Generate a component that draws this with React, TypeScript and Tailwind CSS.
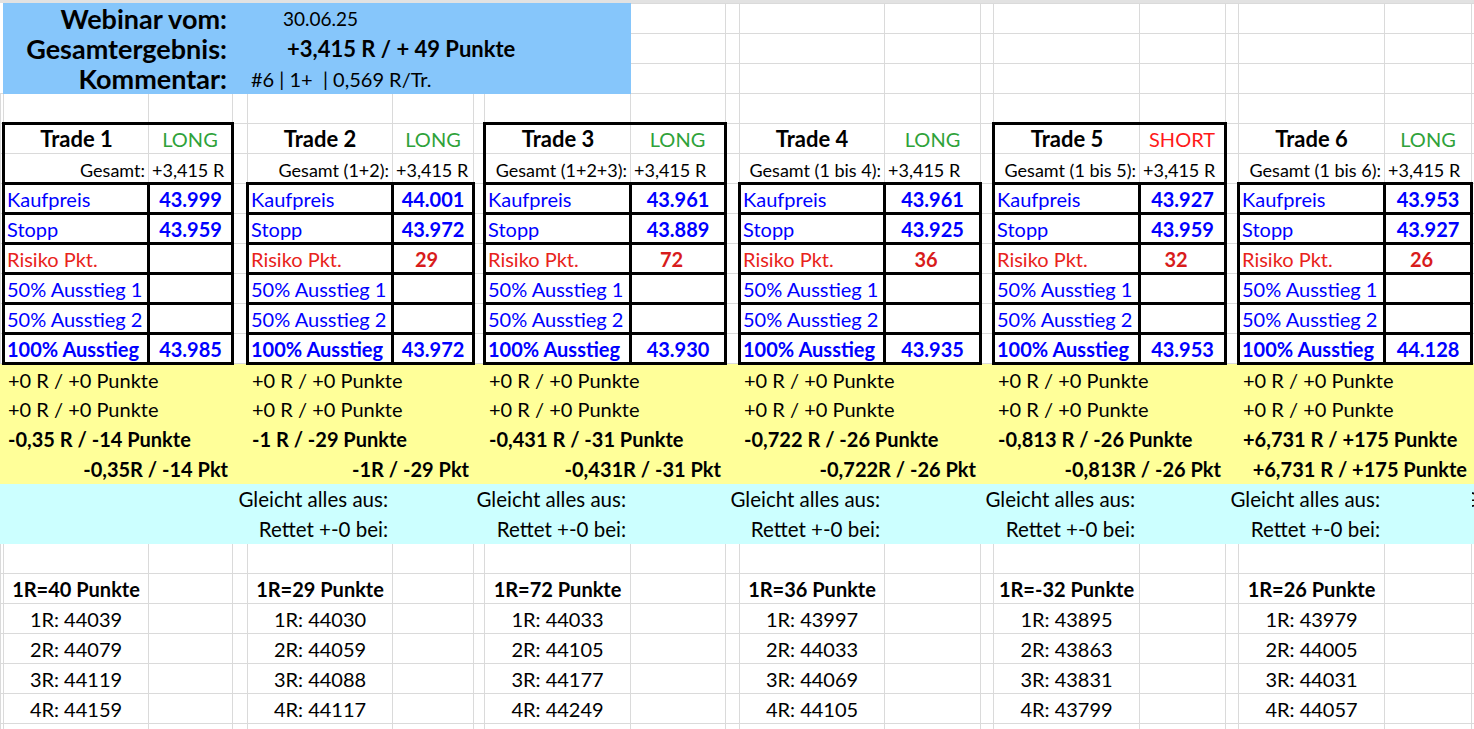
type Trade = {
  name: string;
  dir: "LONG" | "SHORT";
  gesamt: string;
  kauf: string;
  stopp: string;
  risiko: string;
  aus: string;
  res: string;
  sum: string;
  r: string;
  lv: string[];
  boxed: boolean;
};

const trades: Trade[] = [
  { name: "Trade 1", dir: "LONG", gesamt: "Gesamt:", kauf: "43.999", stopp: "43.959", risiko: "", aus: "43.985", res: "-0,35 R / -14 Punkte", sum: "-0,35R / -14 Pkt", r: "1R=40 Punkte", lv: ["44039", "44079", "44119", "44159"], boxed: true },
  { name: "Trade 2", dir: "LONG", gesamt: "Gesamt (1+2):", kauf: "44.001", stopp: "43.972", risiko: "29", aus: "43.972", res: "-1 R / -29 Punkte", sum: "-1R / -29 Pkt", r: "1R=29 Punkte", lv: ["44030", "44059", "44088", "44117"], boxed: false },
  { name: "Trade 3", dir: "LONG", gesamt: "Gesamt (1+2+3):", kauf: "43.961", stopp: "43.889", risiko: "72", aus: "43.930", res: "-0,431 R / -31 Punkte", sum: "-0,431R / -31 Pkt", r: "1R=72 Punkte", lv: ["44033", "44105", "44177", "44249"], boxed: true },
  { name: "Trade 4", dir: "LONG", gesamt: "Gesamt (1 bis 4):", kauf: "43.961", stopp: "43.925", risiko: "36", aus: "43.935", res: "-0,722 R / -26 Punkte", sum: "-0,722R / -26 Pkt", r: "1R=36 Punkte", lv: ["43997", "44033", "44069", "44105"], boxed: false },
  { name: "Trade 5", dir: "SHORT", gesamt: "Gesamt (1 bis 5):", kauf: "43.927", stopp: "43.959", risiko: "32", aus: "43.953", res: "-0,813 R / -26 Punkte", sum: "-0,813R / -26 Pkt", r: "1R=-32 Punkte", lv: ["43895", "43863", "43831", "43799"], boxed: true },
  { name: "Trade 6", dir: "LONG", gesamt: "Gesamt (1 bis 6):", kauf: "43.953", stopp: "43.927", risiko: "26", aus: "44.128", res: "+6,731 R / +175 Punkte", sum: "+6,731 R / +175 Punkte", r: "1R=26 Punkte", lv: ["43979", "44005", "44031", "44057"], boxed: false },
];

// column widths of the sheet (px): pad, then label / value / spacer per trade
const COLS = [
  "w-[3px]", "w-[145px]", "w-[84px]", "w-[15px]", "w-[145px]", "w-[81px]", "w-[11px]",
  "w-[146px]", "w-[95px]", "w-[14px]", "w-[145px]", "w-[96px]", "w-[13px]", "w-[146px]",
  "w-[86px]", "w-[13px]", "w-[146px]", "w-[87px]", "w-[13px]", "w-[146px]",
];

const GRID = "p-0 whitespace-nowrap border border-[#dadada]";
const BOX = "p-0 whitespace-nowrap border-[3px] border-black";
const YEL = "p-0 whitespace-nowrap border border-[#ffff99] bg-[#ffff99]";
const CYA = "p-0 whitespace-nowrap border border-[#ccffff] bg-[#ccffff]";
const BLU = "p-0 whitespace-nowrap border border-[#86c6fb] bg-[#86c6fb]";

const boxRows: { label: string; key: "kauf" | "stopp" | "risiko" | "aus" | null; lc: string; vc: string }[] = [
  { label: "Kaufpreis", key: "kauf", lc: "text-[#0000ff]", vc: "text-[#0000ff] font-bold" },
  { label: "Stopp", key: "stopp", lc: "text-[#0000ff]", vc: "text-[#0000ff] font-bold" },
  { label: "Risiko Pkt.", key: "risiko", lc: "text-[#e8231b]", vc: "text-[#d81c1c] font-bold pr-[13px]" },
  { label: "50% Ausstieg 1", key: null, lc: "text-[#0000ff]", vc: "" },
  { label: "50% Ausstieg 2", key: null, lc: "text-[#0000ff]", vc: "" },
  { label: "100% Ausstieg", key: "aus", lc: "text-[#0000ff] font-bold", vc: "text-[#0000ff] font-bold" },
];

function Blank({ n }: { n: number }) {
  return (
    <>
      {Array.from({ length: n }).map((_, i) => (
        <td key={i} className={GRID} />
      ))}
    </>
  );
}

export default function App() {
  return (
    <div className="w-[1474px] h-[729px] overflow-hidden bg-white font-['Lato',sans-serif] text-[20px] leading-[22px] text-black">
      <div className="h-[3px] bg-[#e2e2e2]" />
      <table className="table-fixed border-collapse w-[1630px]">
        <colgroup>
          {COLS.map((c, i) => (
            <col key={i} className={c} />
          ))}
        </colgroup>
        <tbody>
          {/* blue header block */}
          <tr className="h-[30px]">
            <td className="p-0" />
            <td colSpan={2} className={`${BLU} text-right pr-[5px] font-bold text-[27px] leading-[28px]`}>Webinar vom:</td>
            <td colSpan={5} className={`${BLU} pl-[50px] text-[19px]`}>30.06.25</td>
            <Blank n={12} />
          </tr>
          <tr className="h-[30px]">
            <td className="p-0" />
            <td colSpan={2} className={`${BLU} text-right pr-[5px] font-bold text-[27px] leading-[28px]`}>Gesamtergebnis:</td>
            <td colSpan={5} className={`${BLU} pl-[54px] font-bold text-[22px]`}>+3,415 R / + 49 Punkte</td>
            <Blank n={12} />
          </tr>
          <tr className="h-[30px]">
            <td className="p-0" />
            <td colSpan={2} className={`${BLU} text-right pr-[5px] font-bold text-[27px] leading-[28px]`}>Kommentar:</td>
            <td colSpan={5} className={`${BLU} pl-[18px] text-[20px]`}>#6 | 1+&nbsp; | 0,569 R/Tr.</td>
            <Blank n={12} />
          </tr>
          <tr className="h-[30px]">
            <Blank n={20} />
          </tr>

          {/* trade header */}
          <tr className="h-[30px]">
            <td className={GRID} />
            {trades.map((t) => (
              <TradeHead key={t.name} t={t} />
            ))}
            <td className={GRID} />
          </tr>
          <tr className="h-[30px]">
            <td className={GRID} />
            {trades.map((t) => (
              <TradeSum key={t.name} t={t} />
            ))}
            <td className={GRID} />
          </tr>

          {/* boxed rows */}
          {boxRows.map((row) => (
            <tr key={row.label} className="h-[30px]">
              <td className={GRID} />
              {trades.map((t) => (
                <Cells key={t.name}>
                  <td className={`${BOX} pl-[2px] ${row.lc}`}>{row.label}</td>
                  <td className={`${BOX} text-center ${row.vc}`}>{row.key ? t[row.key] : ""}</td>
                  <td className={GRID} />
                </Cells>
              ))}
              <td className={GRID} />
            </tr>
          ))}

          {/* yellow results */}
          {[0, 1, 2, 3].map((k) => (
            <tr key={k} className="h-[30px]">
              <td className={YEL} />
              {trades.map((t) => (
                <Cells key={t.name}>
                  <td
                    colSpan={2}
                    className={`${YEL} pt-[1px] ${k === 3 ? "text-right pr-[4px]" : "pl-[4px]"} ${k >= 2 ? "font-bold" : ""}`}
                  >
                    {k < 2 ? "+0 R / +0 Punkte" : k === 2 ? t.res : t.sum}
                  </td>
                  <td className={YEL} />
                </Cells>
              ))}
              <td className={YEL} />
            </tr>
          ))}

          {/* cyan break-even rows */}
          {["Gleicht alles aus:", "Rettet +-0 bei:"].map((txt, row) => (
            <tr key={txt} className="h-[30px]">
              <td className={CYA} />
              <td className={CYA} />
              <td className={CYA} />
              {[1, 2, 3, 4, 5, 6].map((i) => (
                <Cells key={i}>
                  {i < 6 ? (
                    <td colSpan={2} className={`${CYA} pt-[1px] pr-[4px] text-right text-[20.5px]`}>
                      {txt}
                    </td>
                  ) : (
                    <td colSpan={2} className={`${CYA} pt-[1px] pr-[18px]`}>
                      {row === 0 && (
                        <div className="flex justify-end overflow-hidden text-[20.5px]">
                          <span className="shrink-0">{txt}</span>
                        </div>
                      )}
                    </td>
                  )}
                  {i < 6 && <td className={CYA} />}
                </Cells>
              ))}
            </tr>
          ))}

          <tr className="h-[30px]">
            <Blank n={20} />
          </tr>

          {/* R levels */}
          {[0, 1, 2, 3, 4].map((k) => (
            <tr key={k} className="h-[30px]">
              <td className={GRID} />
              {trades.map((t) => (
                <Cells key={t.name}>
                  <td className={`${GRID} pt-[1px] text-center ${k === 0 ? "font-bold" : ""}`}>
                    {k === 0 ? t.r : `${k}R: ${t.lv[k - 1]}`}
                  </td>
                  <td className={GRID} />
                  <td className={GRID} />
                </Cells>
              ))}
              <td className={GRID} />
            </tr>
          ))}
          <tr className="h-[30px]">
            <Blank n={20} />
          </tr>
        </tbody>
      </table>
    </div>
  );
}

function Cells({ children }: { children: React.ReactNode }) {
  return <>{children}</>;
}

function TradeHead({ t }: { t: Trade }) {
  const l = t.boxed ? "border-t-[3px] border-t-black border-l-[3px] border-l-black" : "";
  const r = t.boxed ? "border-t-[3px] border-t-black border-r-[3px] border-r-black" : "";
  return (
    <>
      <td className={`${GRID} ${l} text-center font-bold text-[22px]`}>{t.name}</td>
      <td className={`${GRID} ${r} text-center ${t.dir === "LONG" ? "text-[#2fa23a]" : "text-[#ff1a1a]"}`}>{t.dir}</td>
      <td className={GRID} />
    </>
  );
}

function TradeSum({ t }: { t: Trade }) {
  const l = t.boxed ? "border-l-[3px] border-l-black border-b-[3px] border-b-black" : "";
  const r = t.boxed ? "border-r-[3px] border-r-black border-b-[3px] border-b-black" : "";
  return (
    <>
      <td className={`${GRID} ${l} text-right pr-[3px] pt-[3px] text-[18px]`}>{t.gesamt}</td>
      <td className={`${GRID} ${r} pl-[3px] pt-[3px] text-[18px]`}>+3,415 R</td>
      <td className={GRID} />
    </>
  );
}
